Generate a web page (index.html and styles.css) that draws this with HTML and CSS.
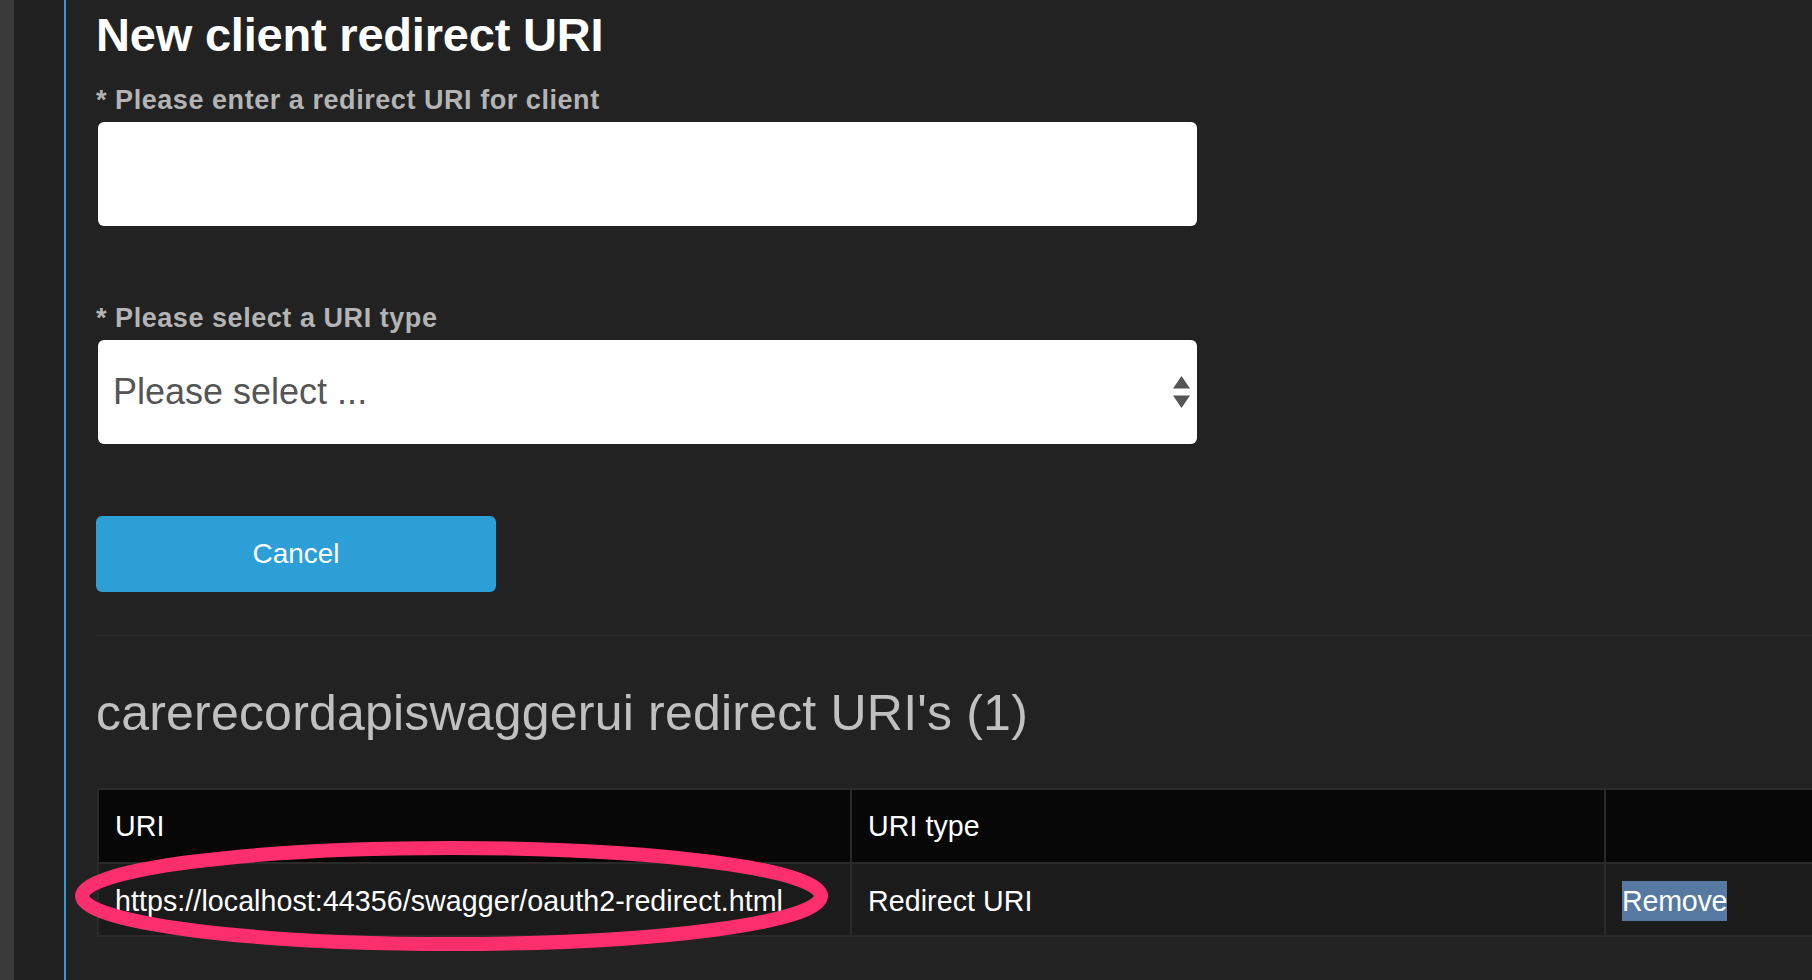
FILE: index.html
```html
<!DOCTYPE html>
<html lang="en">
<head>
<meta charset="utf-8">
<title>New client redirect URI</title>
<link rel="stylesheet" href="styles.css">
</head>
<body>
<div class="layout">
  <div class="strip"></div>
  <div class="gutter"></div>
  <main class="main">
    <h1 class="title">New client redirect URI</h1>
    <label class="field-label" for="uri">* Please enter a redirect URI for client</label>
    <input class="text-input" id="uri" type="text">
    <label class="field-label label-gap">* Please select a URI type</label>
    <div class="select" role="combobox">
      <span class="select-text">Please select ...</span>
      <svg class="select-arrows" width="17" height="33" viewBox="0 0 17 33">
        <polygon points="8.5,0 17,12.5 0,12.5" fill="#555"/>
        <polygon points="0,19.5 17,19.5 8.5,32" fill="#555"/>
      </svg>
    </div>
    <button class="btn" type="button">Cancel</button>
    <hr class="rule">
    <h2 class="subtitle">carerecordapiswaggerui redirect URI's (1)</h2>
    <div class="table-wrap">
      <table class="uri-table">
        <colgroup>
          <col class="c1"><col class="c2"><col class="c3">
        </colgroup>
        <thead>
          <tr><th>URI</th><th>URI type</th><th></th></tr>
        </thead>
        <tbody>
          <tr>
            <td>https://localhost:44356/swagger/oauth2-redirect.html</td>
            <td>Redirect URI</td>
            <td><span class="selected">Remove</span></td>
          </tr>
        </tbody>
      </table>
      <svg class="circle" width="753" height="110" viewBox="0 0 753 110">
        <ellipse cx="376.5" cy="55" rx="369.5" ry="48" fill="none" stroke="#fd2e6e" stroke-width="14"/>
      </svg>
    </div>
  </main>
</div>
</body>
</html>
```

FILE: styles.css
```css
html, body {
  margin: 0;
  padding: 0;
  height: 100%;
}
body {
  background: #222222;
  overflow: hidden;
  font-family: "Liberation Sans", Arial, Helvetica, sans-serif;
  color: #ffffff;
}
.layout {
  display: flex;
  height: 100vh;
}
.strip {
  width: 14px;
  flex: 0 0 14px;
  background: #3a3a3a;
}
.gutter {
  width: 50px;
  flex: 0 0 50px;
  background: #212121;
}
.main {
  flex: 1;
  min-width: 0;
  border-left: 2px solid #2d9bd5;
  padding-left: 30px;
  overflow: hidden;
  display: flex;
  flex-direction: column;
  align-items: flex-start;
}
.title {
  margin: 7px 0 0 0;
  font-size: 47px;
  line-height: 56px;
  font-weight: bold;
  letter-spacing: -0.2px;
  color: #ffffff;
}
.field-label {
  display: block;
  margin-top: 21px;
  font-size: 27px;
  line-height: 32px;
  font-weight: bold;
  letter-spacing: 0.55px;
  color: #b4b4b4;
}
.label-gap {
  margin-top: 76px;
}
.text-input {
  display: block;
  box-sizing: border-box;
  margin: 6px 0 0 2px;
  width: 1099px;
  height: 104px;
  border: none;
  border-radius: 6px;
  background: #ffffff;
  outline: none;
}
.select {
  box-sizing: border-box;
  margin: 6px 0 0 2px;
  width: 1099px;
  height: 104px;
  border-radius: 6px;
  background: #ffffff;
  display: flex;
  align-items: center;
  justify-content: space-between;
  padding: 0 7px 0 15px;
}
.select-text {
  font-size: 36px;
  color: #555555;
}
.select-arrows {
  display: block;
}
.btn {
  margin-top: 72px;
  width: 400px;
  height: 76px;
  border: none;
  border-radius: 6px;
  background: #2d9fd7;
  color: #ffffff;
  font-family: "Liberation Sans", Arial, Helvetica, sans-serif;
  font-size: 28px;
  padding: 0;
}
.rule {
  align-self: stretch;
  margin: 43px 0 0 0;
  height: 1px;
  border: none;
  background: #2c2c2c;
}
.subtitle {
  margin: 47px 0 0 0;
  font-size: 50px;
  line-height: 60px;
  font-weight: normal;
  letter-spacing: 0.2px;
  color: #c0c0c0;
}
.table-wrap {
  position: relative;
  margin-top: 45px;
  margin-left: 1px;
}
.uri-table {
  table-layout: fixed;
  border-collapse: separate;
  border-spacing: 0;
  width: 2263px;
  border-top: 2px solid #2a2a2a;
  border-left: 2px solid #2a2a2a;
  font-size: 28.6px;
  letter-spacing: 0.07px;
  color: #ffffff;
}
.c1 { width: 753px; }
.c2 { width: 754px; }
.c3 { width: 754px; }
.uri-table th,
.uri-table td {
  border-right: 2px solid #2a2a2a;
  border-bottom: 2px solid #2a2a2a;
  padding: 0 16px;
  text-align: left;
  vertical-align: middle;
  white-space: nowrap;
}
.uri-table th {
  height: 72px;
  background: #070707;
  font-weight: normal;
}
.uri-table td {
  box-sizing: border-box;
  height: 73px;
  padding-top: 3px;
  background: #1b1b1b;
}
.selected {
  display: inline-block;
  line-height: 40px;
  background: #5679a2;
  color: #ffffff;
  letter-spacing: -0.2px;
  vertical-align: middle;
}
.circle {
  position: absolute;
  left: -22px;
  top: 53px;
  pointer-events: none;
}
```
